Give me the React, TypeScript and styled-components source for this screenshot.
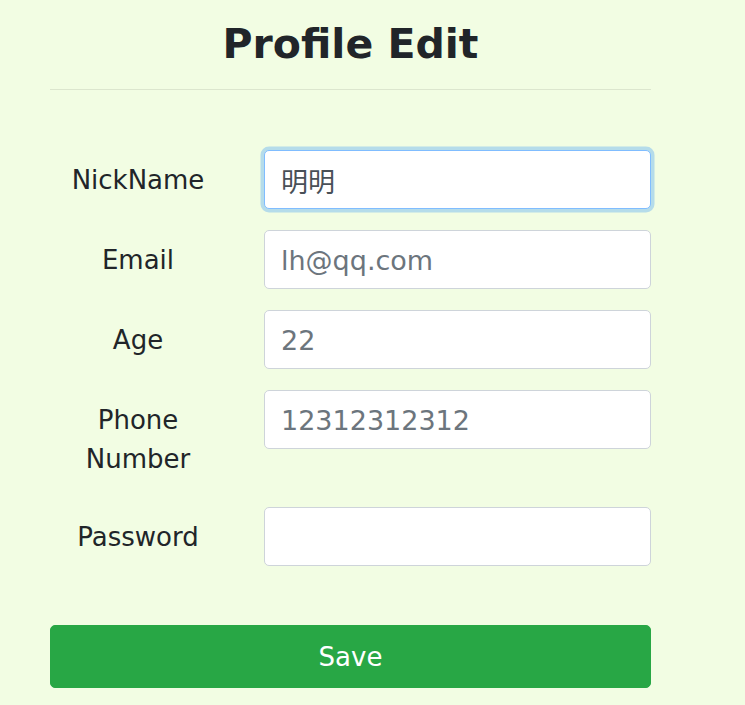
import React from "react";
import styled, { createGlobalStyle } from "styled-components";

const GlobalStyle = createGlobalStyle`
  html, body {
    margin: 0;
    padding: 0;
    background: #f2fde3;
  }
  body {
    font-family: "DejaVu Sans", Verdana, "Noto Sans CJK SC", sans-serif;
    color: #212529;
  }
  * { box-sizing: border-box; }
`;

const Page = styled.div`
  width: 601px;
  margin-left: 50px;
  padding-top: 19px;
  padding-bottom: 17px;
`;

const Title = styled.h1`
  margin: 0;
  font-size: 41px;
  line-height: 50px;
  font-weight: 700;
  text-align: center;
  color: #212529;
`;

const Divider = styled.hr`
  margin: 20px 0 0;
  border: 0;
  border-top: 1px solid rgba(0, 0, 0, 0.09);
`;

const Form = styled.form`
  display: grid;
  grid-template-columns: 176px 1fr;
  column-gap: 38px;
  row-gap: 21px;
  margin-top: 60px;
`;

const Label = styled.label`
  display: block;
  padding: 11px 0 7px;
  font-size: 26px;
  line-height: 39px;
  text-align: center;
  color: #212529;
`;

const Input = styled.input<{ $muted?: boolean }>`
  display: block;
  width: 100%;
  height: 59px;
  padding: 2px 16px 0;
  font-family: "DejaVu Sans", Verdana, "Noto Sans CJK SC", sans-serif;
  font-size: 27px;
  color: ${(p) => (p.$muted ? "#6c757d" : "#495057")};
  background: #ffffff;
  border: 1px solid #ced4da;
  border-radius: 5px;
  outline: none;

  &::placeholder {
    color: #6c757d;
    opacity: 1;
  }

  &:focus {
    border-color: #80bdff;
    box-shadow: 0 0 0 3.5px rgba(0, 123, 255, 0.25);
  }
`;

const SaveButton = styled.button`
  display: block;
  width: 100%;
  height: 63px;
  margin-top: 59px;
  padding-top: 2px;
  font-family: "DejaVu Sans", Verdana, sans-serif;
  font-size: 26px;
  color: #ffffff;
  background: #28a745;
  border: 1px solid #28a745;
  border-radius: 5px;
  cursor: pointer;
`;

type Field = {
  id: string;
  label: string;
  value: string;
  type?: string;
  focus?: boolean;
};

const fields: Field[] = [
  { id: "nick", label: "NickName", value: "明明", focus: true },
  { id: "email", label: "Email", value: "lh@qq.com" },
  { id: "age", label: "Age", value: "22" },
  { id: "phone", label: "Phone Number", value: "12312312312" },
  { id: "password", label: "Password", value: "", type: "password" },
];

export default function App() {
  return (
    <>
      <GlobalStyle />
      <Page>
        <Title>Profile Edit</Title>
        <Divider />
        <Form onSubmit={(e) => e.preventDefault()}>
          {fields.map((f) => (
            <React.Fragment key={f.id}>
              <Label htmlFor={f.id}>{f.label}</Label>
              <div>
                <Input
                  id={f.id}
                  type={f.type ?? "text"}
                  defaultValue={f.value}
                  autoFocus={f.focus}
                  $muted={!f.focus}
                />
              </div>
            </React.Fragment>
          ))}
        </Form>
        <SaveButton type="button">Save</SaveButton>
      </Page>
    </>
  );
}
